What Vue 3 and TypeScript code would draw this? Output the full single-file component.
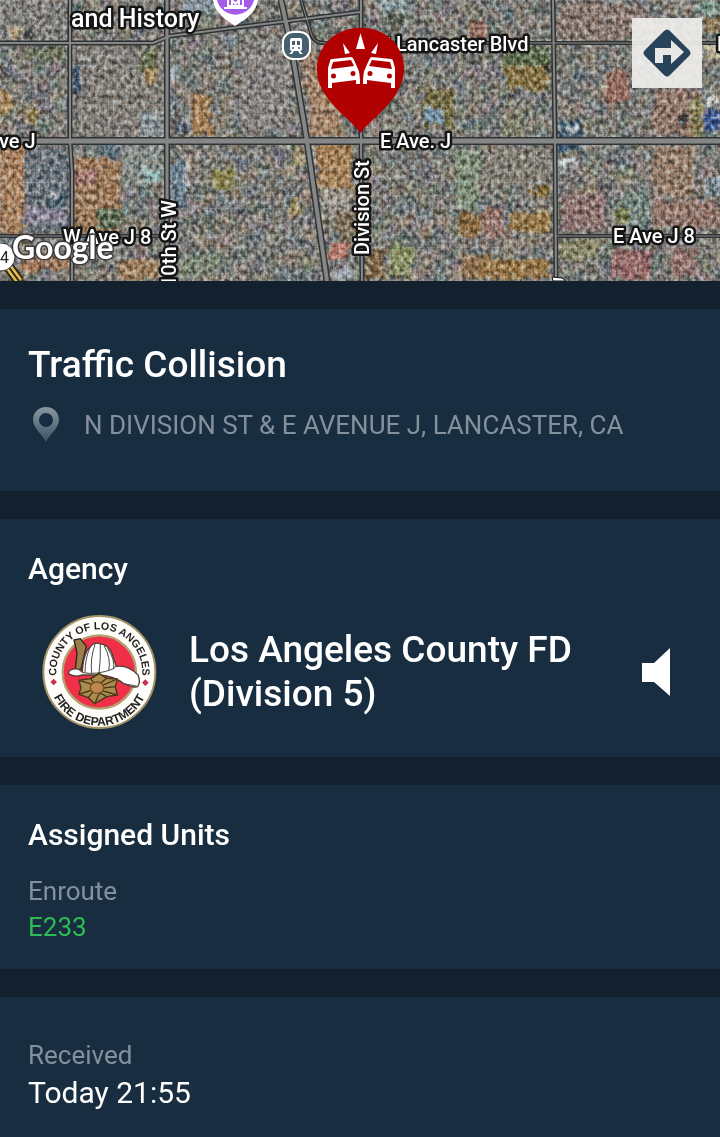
<script setup lang="ts">
interface Patch { x: number; y: number; w: number; h: number; c: string }
interface Label { text: string; x: number; y: number; size: number; rotate?: boolean }
interface Road { d: string; w: number }

const patches: Patch[] = [
  { x: 0, y: 0, w: 70, h: 42, c: '#82807e' },
  { x: 10, y: 28, w: 9, h: 11, c: '#d8c090' },
  { x: 25, y: 30, w: 8, h: 8, c: '#22282a' },
  { x: 74, y: 46, w: 92, h: 92, c: '#85807a' },
  { x: 73, y: 64, w: 9, h: 28, c: '#2f4a66' },
  { x: 80, y: 58, w: 8, h: 6, c: '#d8dcda' },
  { x: 25, y: 48, w: 40, h: 14, c: '#6d7358' },
  { x: 0, y: 92, w: 12, h: 22, c: '#b58a50' },
  { x: 26, y: 108, w: 12, h: 18, c: '#8d7840' },
  { x: 140, y: 48, w: 16, h: 24, c: '#66704a' },
  { x: 146, y: 70, w: 11, h: 14, c: '#b58c4c' },
  { x: 142, y: 112, w: 23, h: 24, c: '#91a0a8' },
  { x: 192, y: 96, w: 20, h: 38, c: '#b08048' },
  { x: 176, y: 118, w: 12, h: 18, c: '#4e5668' },
  { x: 178, y: 116, w: 12, h: 4, c: '#e2dfe2' },
  { x: 170, y: 66, w: 10, h: 14, c: '#a9bcc8' },
  { x: 180, y: 0, w: 40, h: 12, c: '#8ea2b0' },
  { x: 0, y: 144, w: 24, h: 90, c: '#b88458' },
  { x: 26, y: 148, w: 43, h: 84, c: '#65717e' },
  { x: 26, y: 208, w: 42, h: 16, c: '#8c85a0' },
  { x: 48, y: 190, w: 18, h: 20, c: '#3c586a' },
  { x: 51, y: 191, w: 5, h: 7, c: '#eef0f0' },
  { x: 74, y: 158, w: 46, h: 76, c: '#a87951' },
  { x: 74, y: 172, w: 22, h: 14, c: '#b0766c' },
  { x: 96, y: 208, w: 24, h: 20, c: '#57694c' },
  { x: 100, y: 142, w: 20, h: 16, c: '#516b7c' },
  { x: 122, y: 144, w: 42, h: 40, c: '#8a9490' },
  { x: 144, y: 170, w: 17, h: 10, c: '#9ed0d0' },
  { x: 172, y: 160, w: 14, h: 50, c: '#647f94' },
  { x: 185, y: 161, w: 4, h: 26, c: '#dce2e8' },
  { x: 212, y: 168, w: 22, h: 20, c: '#918a45' },
  { x: 118, y: 260, w: 42, h: 20, c: '#a88057' },
  { x: 20, y: 255, w: 50, h: 16, c: '#aa7755' },
  { x: 180, y: 256, w: 40, h: 24, c: '#7b8972' },
  { x: 240, y: 40, w: 50, h: 90, c: '#8a8684' },
  { x: 302, y: 50, w: 18, h: 40, c: '#a47f66' },
  { x: 310, y: 70, w: 32, h: 66, c: '#b18665' },
  { x: 316, y: 144, w: 36, h: 44, c: '#b5854f' },
  { x: 294, y: 148, w: 10, h: 18, c: '#b09d72' },
  { x: 322, y: 190, w: 26, h: 24, c: '#a9a194' },
  { x: 338, y: 212, w: 14, h: 28, c: '#7e6748' },
  { x: 330, y: 242, w: 18, h: 18, c: '#c57965' },
  { x: 334, y: 268, w: 18, h: 12, c: '#b4c1cf' },
  { x: 290, y: 198, w: 10, h: 20, c: '#b39a61' },
  { x: 366, y: 250, w: 18, h: 30, c: '#805e38' },
  { x: 388, y: 244, w: 24, h: 32, c: '#8b975d' },
  { x: 380, y: 0, w: 24, h: 14, c: '#99b3b8' },
  { x: 424, y: 88, w: 30, h: 38, c: '#736b35' },
  { x: 424, y: 110, w: 20, h: 13, c: '#789db8' },
  { x: 456, y: 150, w: 24, h: 60, c: '#7f9278' },
  { x: 458, y: 214, w: 22, h: 24, c: '#916633' },
  { x: 460, y: 254, w: 30, h: 24, c: '#966f47' },
  { x: 388, y: 10, w: 14, h: 20, c: '#51584a' },
  { x: 470, y: 20, w: 18, h: 20, c: '#9a6654' },
  { x: 504, y: 48, w: 46, h: 18, c: '#576b42' },
  { x: 506, y: 66, w: 44, h: 25, c: '#8c7337' },
  { x: 543, y: 64, w: 9, h: 8, c: '#332e20' },
  { x: 504, y: 112, w: 20, h: 25, c: '#7f8165' },
  { x: 558, y: 4, w: 90, h: 36, c: '#8e7870' },
  { x: 605, y: 72, w: 24, h: 30, c: '#9f6858' },
  { x: 556, y: 120, w: 26, h: 30, c: '#355775' },
  { x: 568, y: 127, w: 10, h: 4, c: '#d6e5ed' },
  { x: 558, y: 158, w: 18, h: 8, c: '#dce8f2' },
  { x: 654, y: 90, w: 46, h: 45, c: '#987566' },
  { x: 678, y: 114, w: 8, h: 12, c: '#252a28' },
  { x: 690, y: 100, w: 12, h: 34, c: '#908551' },
  { x: 706, y: 94, w: 14, h: 12, c: '#eef0ee' },
  { x: 704, y: 110, w: 16, h: 20, c: '#2a519c' },
  { x: 704, y: 46, w: 16, h: 14, c: '#d5cda5' },
  { x: 696, y: 0, w: 24, h: 16, c: '#83a49a' },
  { x: 704, y: 18, w: 16, h: 14, c: '#92794e' },
  { x: 482, y: 148, w: 70, h: 40, c: '#868176' },
  { x: 526, y: 188, w: 24, h: 8, c: '#8a6a25' },
  { x: 508, y: 212, w: 44, h: 20, c: '#a1793d' },
  { x: 482, y: 208, w: 20, h: 28, c: '#a1766a' },
  { x: 482, y: 260, w: 68, h: 20, c: '#a3773b' },
  { x: 560, y: 192, w: 45, h: 38, c: '#92706e' },
  { x: 620, y: 192, w: 28, h: 34, c: '#718981' },
  { x: 616, y: 208, w: 12, h: 16, c: '#7c8143' },
  { x: 654, y: 146, w: 40, h: 50, c: '#9c7e66' },
  { x: 654, y: 200, w: 64, h: 28, c: '#9a7567' },
  { x: 706, y: 178, w: 14, h: 20, c: '#92a6b8' },
  { x: 708, y: 184, w: 8, h: 12, c: '#254047' },
  { x: 612, y: 250, w: 40, h: 28, c: '#9b6464' },
  { x: 672, y: 248, w: 26, h: 28, c: '#9b7069' },
  { x: 560, y: 240, w: 40, h: 20, c: '#8b8a62' },
]

const roads: Road[] = [
  { d: 'M0 43H153L170 36L240 27L360 12', w: 2 },
  { d: 'M0 141H720', w: 5 },
  { d: 'M70 0V141L72 172V281', w: 2 },
  { d: 'M167 0V281', w: 3 },
  { d: 'M281 0L291 45L307 141L327 281', w: 4 },
  { d: 'M301 0L311 33Q313 43 325 43H720', w: 1 },
  { d: 'M361 0V141L362 281', w: 2 },
  { d: 'M553 0L555 141L556 281', w: 2 },
  { d: 'M0 236H167', w: 1 },
  { d: 'M556 236H720', w: 1 },
]

const labels: Label[] = [
  { text: 'and History', x: 71, y: 27, size: 25 },
  { text: 'Lancaster Blvd', x: 396, y: 51, size: 20 },
  { text: 'E Ave. J', x: 380, y: 148, size: 20 },
  { text: 've J', x: -1, y: 148, size: 20 },
  { text: 'W Ave J 8', x: 63, y: 244, size: 20 },
  { text: 'E Ave J 8', x: 613, y: 243, size: 20 },
  { text: 'Division St', x: 369, y: 255, size: 20, rotate: true },
  { text: '10th St W', x: 176, y: 287, size: 20, rotate: true },
  { text: 'E', x: 717, y: 51, size: 20 },
]

const agency: string = 'Los Angeles County FD (Division 5)'
const units: string[] = ['E233']
</script>

<template>
  <main class="incident">
    <div class="map">
      <svg class="map-canvas" viewBox="0 0 720 281" preserveAspectRatio="xMidYMid slice" role="img" aria-label="Satellite map of Lancaster">
        <defs>
          <filter id="soften" x="-5%" y="-5%" width="110%" height="110%">
            <feTurbulence type="fractalNoise" baseFrequency="0.12" numOctaves="2" seed="4" result="n" />
            <feDisplacementMap in="SourceGraphic" in2="n" scale="14" xChannelSelector="R" yChannelSelector="G" />
            <feGaussianBlur stdDeviation="1" />
          </filter>
          <filter id="blocks" x="0" y="0" width="100%" height="100%" color-interpolation-filters="sRGB">
            <feTurbulence type="fractalNoise" baseFrequency="0.24 0.2" numOctaves="3" seed="7" />
            <feColorMatrix values="1.7 .2 0 0 -.46  1.7 .05 .15 0 -.46  1.7 0 .25 0 -.49  0 0 0 0 1" />
          </filter>
          <filter id="tint" x="0" y="0" width="100%" height="100%" color-interpolation-filters="sRGB">
            <feTurbulence type="fractalNoise" baseFrequency="0.06" numOctaves="3" seed="12" />
            <feColorMatrix values="1.2 0 0 0 -.12  .6 .5 0 0 -.07  .2 .3 .6 0 -.08  0 0 0 0 1" />
          </filter>
          <pattern id="streets" width="9" height="13" patternUnits="userSpaceOnUse">
            <path d="M0 .5H9M.5 0V13" stroke="#bab6ad" stroke-width="1" opacity=".25" />
            <path d="M4.500 0V13" stroke="#252c2a" stroke-width="1" opacity=".2" />
          </pattern>
        </defs>
        <rect width="720" height="281" fill="#7d7c77" />
        <rect class="tint" width="720" height="281" filter="url(#tint)" />
        <g filter="url(#soften)" opacity=".85">
          <rect v-for="(p, i) in patches" :key="i" :x="p.x" :y="p.y" :width="p.w" :height="p.h" :fill="p.c" />
        </g>
        <rect width="720" height="281" fill="url(#streets)" />
        <rect class="grain" width="720" height="281" filter="url(#blocks)" />

        <g fill="none" stroke-linejoin="round">
          <path v-for="(r, i) in roads" :key="'c' + i" :d="r.d" stroke="#303334" :stroke-width="r.w + 3" />
          <path v-for="(r, i) in roads" :key="'r' + i" :d="r.d" stroke="#858787" :stroke-width="r.w" />
        </g>
        <g fill="none">
          <path d="M5 262L19 281" stroke="#2c2616" stroke-width="11" />
          <path d="M5 262L19 281" stroke="#e9bc53" stroke-width="7" />
          <path d="M5 262L19 281" stroke="#2c2616" stroke-width="2" />
        </g>
        <path d="M552 277L562 278L566 281H553Z" fill="#fff" stroke="#111" />

        <g class="place-labels">
          <text
            v-for="l in labels" :key="l.text" :x="l.x" :y="l.y" :font-size="l.size"
            :transform="l.rotate ? `rotate(-90 ${l.x} ${l.y})` : undefined"
          >{{ l.text }}</text>
        </g>

        <circle cx="1" cy="257" r="14" fill="#fff" stroke="#3a3a3a" />
        <text class="shield" x="0" y="263">4</text>
        <text class="google" x="12" y="259">Google</text>

        <path d="M213 0C215 13 225 19 235 26C246 19 256 13 258 0Z" fill="#fff" />
        <path d="M217 0A19 19 0 0 0 254 0Z" fill="#a45be8" />
        <path d="M224 8H247M227 6H244M228 6V0M243 6V0M232 5V0L235.500 4L239 0V5" fill="none" stroke="#fff" stroke-width="2" />

        <rect x="283" y="32" width="27" height="27" rx="10" fill="#46606d" stroke="#fff" stroke-width="2" />
        <path d="M292 38H300Q302 38 302 40V49Q302 51 300 51L303 54H300L298 51H294L292 54H289L292 51Q290 51 290 49V40Q290 38 292 38Z" fill="#fff" />
        <path d="M292 41H295V45H292ZM297 41H300V45H297Z" fill="#46606d" />
        <circle cx="293" cy="48" r="1" fill="#46606d" /><circle cx="299" cy="48" r="1" fill="#46606d" />

        <path d="M386 37L391 36L390 41" fill="#fff" stroke="#111" />
        <path d="M360.500 133C351 120 333 109 323 91C312 71 317 51 330 39C347 24 375 24 391 39C404 51 409 71 398 91C388 109 370 120 360.500 133Z" fill="#b00000" />
        <g fill="#fff">
          <path d="M360.500 33L365 49H356ZM343 43L350 53L345 54ZM378 43L371 53L376 54Z" />
          <g id="car">
            <path fill-rule="evenodd" d="M332 59L351 57Q353 57 354 60L358 69Q360 72 360 84H356V80L332 83V88H328V68L330 61Q330 59 332 59ZM333 62L331 69L354 66L351 60ZM333.500 73.500A2.500 2.500 0 1 0 333.500 78.500A2.500 2.500 0 1 0 333.500 73.500ZM353 71A2.500 2.500 0 1 0 353 76A2.500 2.500 0 1 0 353 71Z" />
          </g>
          <use href="#car" transform="translate(723 0) scale(-1 1)" />
        </g>
      </svg>
      <button class="directions" type="button" aria-label="Directions">
        <svg viewBox="0 0 70 70" aria-hidden="true">
          <path d="M32 13Q35 10 38 13L57 32Q60 35 57 38L38 57Q35 60 32 57L13 38Q10 35 13 32Z" fill="#284359" />
          <path d="M23 45V30H39V22L52 34L39 46V37H31V45Z" fill="#e8e7e5" />
        </svg>
      </button>
    </div>

    <section class="card summary">
      <h1>Traffic Collision</h1>
      <p class="address">
        <svg viewBox="0 0 28 36" aria-hidden="true">
          <defs><linearGradient id="pinShade" x2="0" y2="1"><stop stop-color="#8a97a1" /><stop offset="1" stop-color="#3b5265" /></linearGradient></defs>
          <path fill="url(#pinShade)" fill-rule="evenodd" d="M14 0C6 0 1 6 1 13C1 21 11 28 14 35C17 28 27 21 27 13C27 6 22 0 14 0ZM14 6A7 7 0 1 1 14 20A7 7 0 1 1 14 6Z" />
        </svg>
        <span>N DIVISION ST &amp; E AVENUE J, LANCASTER, CA</span>
      </p>
    </section>

    <section class="card">
      <h2>Agency</h2>
      <div class="agency">
        <svg class="seal" viewBox="36 31 345 342" role="img" aria-label="County of Los Angeles Fire Department">
          <defs>
            <path id="arcTop" d="M83 235A129 129 0 1 1 333 235" />
            <path id="arcBottom" d="M57 212A151 151 0 0 0 359 212" />
          </defs>
          <circle cx="208" cy="202" r="168" fill="#fefdfa" stroke="#a39167" stroke-width="6" />
          <circle cx="208" cy="202" r="110" fill="#ef3048" stroke="#b4a071" stroke-width="7" />
          <text class="seal-text"><textPath href="#arcTop" startOffset="50%" text-anchor="middle">COUNTY OF LOS ANGELES</textPath></text>
          <text class="seal-text seal-bottom"><textPath href="#arcBottom" startOffset="50%" text-anchor="middle">FIRE DEPARTMENT</textPath></text>
          <path d="M71 222L81 232L71 242L61 232ZM346 224L356 234L346 244L336 234Z" fill="#c92f50" />
          <path d="M132 106L151 102L169 125L151 201L136 195L141 145Z" fill="#9b7e49" stroke="#2c251b" stroke-width="4" />
          <path d="M115 207Q116 190 145 193L157 202Q160 144 181 126Q194 110 212 118Q241 120 251 163L259 185Q294 180 324 211Q333 232 323 246Q309 250 282 237Q251 214 210 211L157 211Q134 219 115 207Z" fill="#fff" stroke="#513e34" stroke-width="4" />
          <path d="M181 126Q165 161 165 204M195 119Q180 163 185 205M211 119Q212 167 207 206M223 124Q244 162 236 199M233 131Q255 165 251 193M158 204Q203 212 251 192L258 184M284 238Q310 241 324 246" fill="none" stroke="#4d4944" stroke-width="3" />
          <path d="M207 206L230 221L262 223L256 246L262 271L230 276L194 297L175 279L147 269L153 250L147 227L182 222Z" fill="#aa8c4d" stroke="#453719" stroke-width="4" />
          <path d="M147 227L189 240M207 206L182 222L192 236L211 236L230 221M262 223L217 242M256 246L219 250M262 271L216 258M230 276L209 264L194 297M188 262L175 279M147 269L186 256" fill="none" stroke="#483716" stroke-width="4" />
          <ellipse cx="201" cy="249" rx="20" ry="17" fill="#bd874e" stroke="#795027" stroke-width="4" />
        </svg>
        <p class="agency-name">{{ agency }}</p>
        <button class="sound" type="button" aria-label="Listen">
          <svg viewBox="0 0 28 48" aria-hidden="true"><path d="M0 15H12L28 0V48L12 34H0Z" fill="#fff" /></svg>
        </button>
      </div>
    </section>

    <section class="card assigned">
      <h2>Assigned Units</h2>
      <p class="caption">Enroute</p>
      <p v-for="unit in units" :key="unit" class="unit">{{ unit }}</p>
    </section>

    <section class="card received">
      <p class="caption">Received</p>
      <p class="time">Today 21:55</p>
    </section>
  </main>
</template>

<style>
body {
  background: #12212d;
}
</style>

<style scoped>
.incident {
  display: flex;
  flex-direction: column;
  gap: 28px;
  min-height: 100vh;
  color: #fff;
  background: #12212d;
  font-family: Roboto, "Liberation Sans", sans-serif;
}
h1, h2, p {
  margin: 0;
}
.map {
  position: relative;
  height: 281px;
  overflow: hidden;
}
.map-canvas {
  display: block;
  width: 100%;
  height: 100%;
}
.grain {
  mix-blend-mode: hard-light;
  opacity: .5;
}
.tint {
  opacity: .3;
}
.place-labels text {
  fill: #fff;
  stroke: #151515;
  stroke-width: 5px;
  stroke-linejoin: round;
  paint-order: stroke;
  font-weight: 500;
}
.shield {
  fill: #222;
  font-size: 16px;
}
.google {
  fill: #fff;
  stroke: #3b3b3b;
  stroke-width: 3px;
  paint-order: stroke;
  font-family: Lato, sans-serif;
  font-size: 32px;
  font-weight: 700;
}
.directions {
  position: absolute;
  top: 18px;
  right: 18px;
  width: 70px;
  height: 70px;
  padding: 0;
  border: 0;
  background: rgba(240, 239, 237, .92);
}
.directions svg {
  display: block;
}
.card {
  padding: 32px 28px 28px;
  background: #182d3f;
}
h1 {
  font-size: 37px;
  line-height: 44px;
  font-weight: 500;
}
h2 {
  font-size: 30px;
  line-height: 36px;
  font-weight: 500;
}
.summary {
  padding-top: 34px;
  padding-bottom: 48px;
}
.address {
  display: flex;
  align-items: center;
  gap: 24px;
  margin-top: 20px;
  padding-left: 4px;
  color: #84919d;
  font-size: 26px;
  line-height: 36px;
}
.address svg {
  flex: none;
  width: 28px;
  height: 36px;
}
.agency {
  display: flex;
  align-items: center;
  margin-top: 28px;
  padding: 0 22px 0 14px;
}
.seal {
  flex: none;
  width: 115px;
  height: 114px;
}
.seal-text {
  fill: #222;
  font-family: "Liberation Sans", sans-serif;
  font-size: 32px;
  font-weight: 700;
}
.seal-bottom {
  font-size: 36px;
}
.agency-name {
  flex: 1;
  padding: 0 32px;
  font-size: 37px;
  line-height: 44px;
  font-weight: 500;
}
.sound {
  flex: none;
  padding: 0;
  border: 0;
  background: none;
}
.sound svg {
  display: block;
  width: 28px;
  height: 48px;
}
.caption {
  color: #84919d;
  font-size: 26px;
  line-height: 36px;
}
.assigned {
  padding-bottom: 24px;
}
.assigned .caption {
  margin-top: 20px;
}
.unit {
  color: #2dbb54;
  font-size: 26px;
  line-height: 36px;
}
.received {
  flex: 1;
  padding-top: 40px;
  padding-bottom: 20px;
}
.time {
  font-size: 30px;
  line-height: 40px;
}
</style>
